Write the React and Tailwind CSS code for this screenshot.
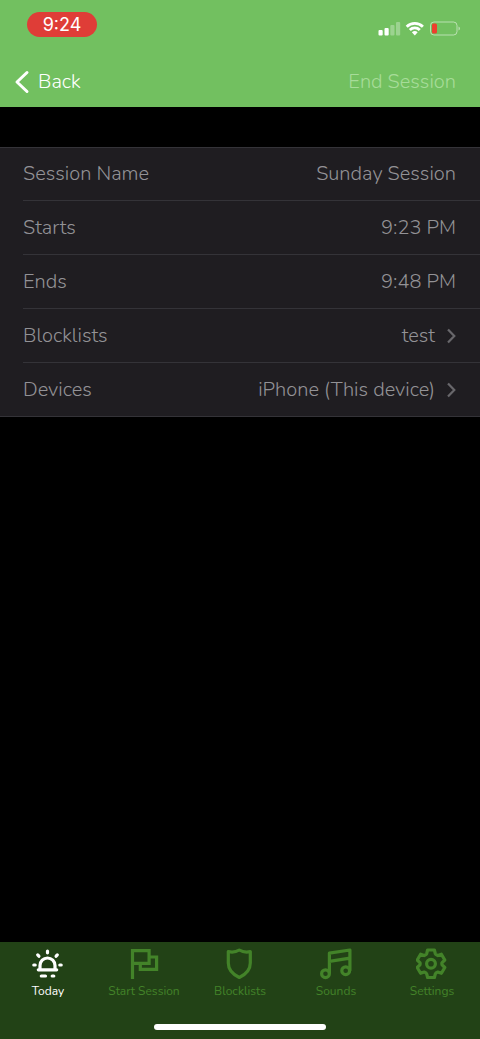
const ROWS = [
  { label: "Session Name", value: "Sunday Session" },
  { label: "Starts",       value: "9:23 PM" },
  { label: "Ends",         value: "9:48 PM" },
  { label: "Blocklists",   value: "test", link: true },
  { label: "Devices",      value: "iPhone (This device)", link: true },
];

const TABS = [
  { label: "Today",         Icon: SunIcon, active: true },
  { label: "Start Session", Icon: FlagIcon },
  { label: "Blocklists",    Icon: ShieldIcon },
  { label: "Sounds",        Icon: MusicIcon },
  { label: "Settings",      Icon: GearIcon },
];

// ── Tab icons ───────────────────────────────────────────────────
function TabIcon({ children, ...props }) {
  return (
    <svg width="32" height="32" viewBox="0 0 32 32" fill="none" stroke="currentColor" strokeWidth="3.2" aria-hidden="true" {...props}>
      {children}
    </svg>
  );
}

function SunIcon() {
  return (
    <TabIcon strokeLinecap="round">
      <path d="M6.3 21.8h18.4M8 21.5v-4a7.5 7.5 0 0 1 15 0v4" />
      <path d="M15.5 3.2v1.6M5.7 6.9l1.2 1.3M25.3 6.9l-1.2 1.3M1.8 17h1.4M27.8 17h1.4M9.3 28h4.2M20.2 28h1.6" />
    </TabIcon>
  );
}

function FlagIcon() {
  return (
    <TabIcon>
      <path d="M4.5 31V2.7h16.6v12.6H4.5" />
      <path d="M21.1 9h7.5v12.3H12.3v-6" />
    </TabIcon>
  );
}

function ShieldIcon() {
  return (
    <TabIcon strokeLinejoin="round">
      <path d="M15.3 2C12 4 8.2 4.5 4.3 3.6V15c0 6.5 4 11.2 11 14.5 7-3.3 11-8 11-14.5V3.6C22.4 4.5 18.6 4 15.3 2Z" />
    </TabIcon>
  );
}

function MusicIcon() {
  return (
    <TabIcon strokeLinejoin="round">
      <circle cx="5.5" cy="25.7" r="3.9" />
      <circle cx="25.7" cy="22.7" r="3.9" />
      <path d="M9.4 25.7V5.2L29.9 2v20.7M9.4 13.3 29.9 10.2" />
    </TabIcon>
  );
}

function GearIcon() {
  return (
    <TabIcon strokeLinejoin="round">
      <path d="M11.6 2h6.8l.9 3.7q.3.9 2.5 1.9l3.6-1.4 3.4 5.8-2.7 2.6q-.5.9 0 2.3l2.700 2.600-3.400 5.800-3.600-1.300q-2.200 1-2.500 1.900l-.9 3.600h-6.800l-.9-3.600q-.3-.9-2.500-1.900l-3.600 1.300-3.400-5.800 2.700-2.600q.5-1.400 0-2.300L1.200 12l3.400-5.800 3.600 1.400q2.200-1 2.500-1.900Z" />
      <circle cx="15" cy="15.7" r="4.4" />
    </TabIcon>
  );
}

// ── Status bar ──────────────────────────────────────────────────
function StatusBar() {
  return (
    <div className="flex items-start justify-between pt-3 pl-[27px] pr-[19px]">
      <span className="w-[70px] h-[25px] rounded-full bg-[#df3d37] text-center text-lg leading-[26px] text-white font-['Inter',sans-serif]">
        9:24
      </span>
      <svg className="mt-2" width="83" height="18" viewBox="0 0 83 18" fill="none" aria-hidden="true">
        {/* Signal */}
        <g fill="#fff">
          <rect x="0.5" y="10" width="4.2" height="5.5" rx="1" />
          <rect x="6.5" y="8" width="4.2" height="7.5" rx="1" />
          <rect x="12.3" y="5" width="4.2" height="10.5" rx="1" opacity="0.3" />
          <rect x="18" y="2" width="4.2" height="13.5" rx="1" opacity="0.3" />
        </g>
        {/* Wi-Fi */}
        <g stroke="#fff" strokeWidth="2.8">
          <path d="M28.7 6.7a11.5 11.5 0 0 1 16.2 0" />
          <path d="M31.8 10a7.1 7.1 0 0 1 10 0" />
        </g>
        <path d="M33.9 12.3a4.3 4.3 0 0 1 5.8 0l-2.9 3.1Z" fill="#fff" />
        {/* Battery */}
        <rect x="52.5" y="2" width="26.5" height="13" rx="3.5" stroke="#fff" strokeOpacity="0.5" />
        <rect x="54" y="3.5" width="5" height="10" rx="1.5" fill="#ee3e2e" />
        <path d="M80.5 6.5v4q1.5-.5 1.5-2t-1.5-2Z" fill="#fff" fillOpacity="0.5" />
      </svg>
    </div>
  );
}

function Row({ label, value, link }) {
  const content = (
    <>
      <span>{label}</span>
      <span className="flex items-center">
        {value}
        {link && (
          <svg className="ml-3 text-[#68676b]" width="9" height="16" viewBox="0 0 9 16" fill="none" stroke="currentColor" strokeWidth="2.2" aria-hidden="true">
            <path d="M1 1.5 7.300 8 1 14.500" />
          </svg>
        )}
      </span>
    </>
  );

  return (
    <li className="h-[54px] border-t border-[#343338] first:h-[52px] first:border-t-0">
      {link
        ? <button className="flex h-full w-full items-center justify-between pr-6 font-light">{content}</button>
        : <div className="flex h-full items-center justify-between pr-6">{content}</div>}
    </li>
  );
}

export default function App() {
  return (
    <div className="min-h-screen flex flex-col bg-black font-['Nunito','Lato',sans-serif]">
      <header className="bg-[#72c060]">
        <StatusBar />
        <nav className="flex h-[50px] mt-[19px] items-center justify-between pl-3 pr-6 text-xl font-light">
          <button className="flex items-center text-white">
            <svg width="20" height="26" viewBox="0 0 20 26" fill="none" stroke="currentColor" strokeWidth="3" strokeLinecap="round" strokeLinejoin="round" aria-hidden="true">
              <path d="M15 3.5 5 13l10 9.500" />
            </svg>
            <span className="ml-[6px]">Back</span>
          </button>
          <button className="text-[#a7dc99]" disabled>End Session</button>
        </nav>
      </header>

      <main className="flex-1 pt-10">
        <ul className="border-y border-[#343338] bg-[#1f1d21] pl-[23px] text-xl font-light text-[#939296]">
          {ROWS.map((row) => <Row key={row.label} {...row} />)}
        </ul>
      </main>

      <footer className="bg-[#224216]">
        <nav className="grid grid-cols-5 pt-[6px]">
          {TABS.map(({ label, Icon, active }) => (
            <button
              key={label}
              className={`flex flex-col items-center text-xs leading-4 ${active ? "text-white" : "text-[#438329]"}`}
            >
              <Icon />
              <span className="mt-[3px]">{label}</span>
            </button>
          ))}
        </nav>
        <div className="mx-auto mt-[25px] mb-[9px] h-[6px] w-[172px] rounded-full bg-white" />
      </footer>
    </div>
  );
}
